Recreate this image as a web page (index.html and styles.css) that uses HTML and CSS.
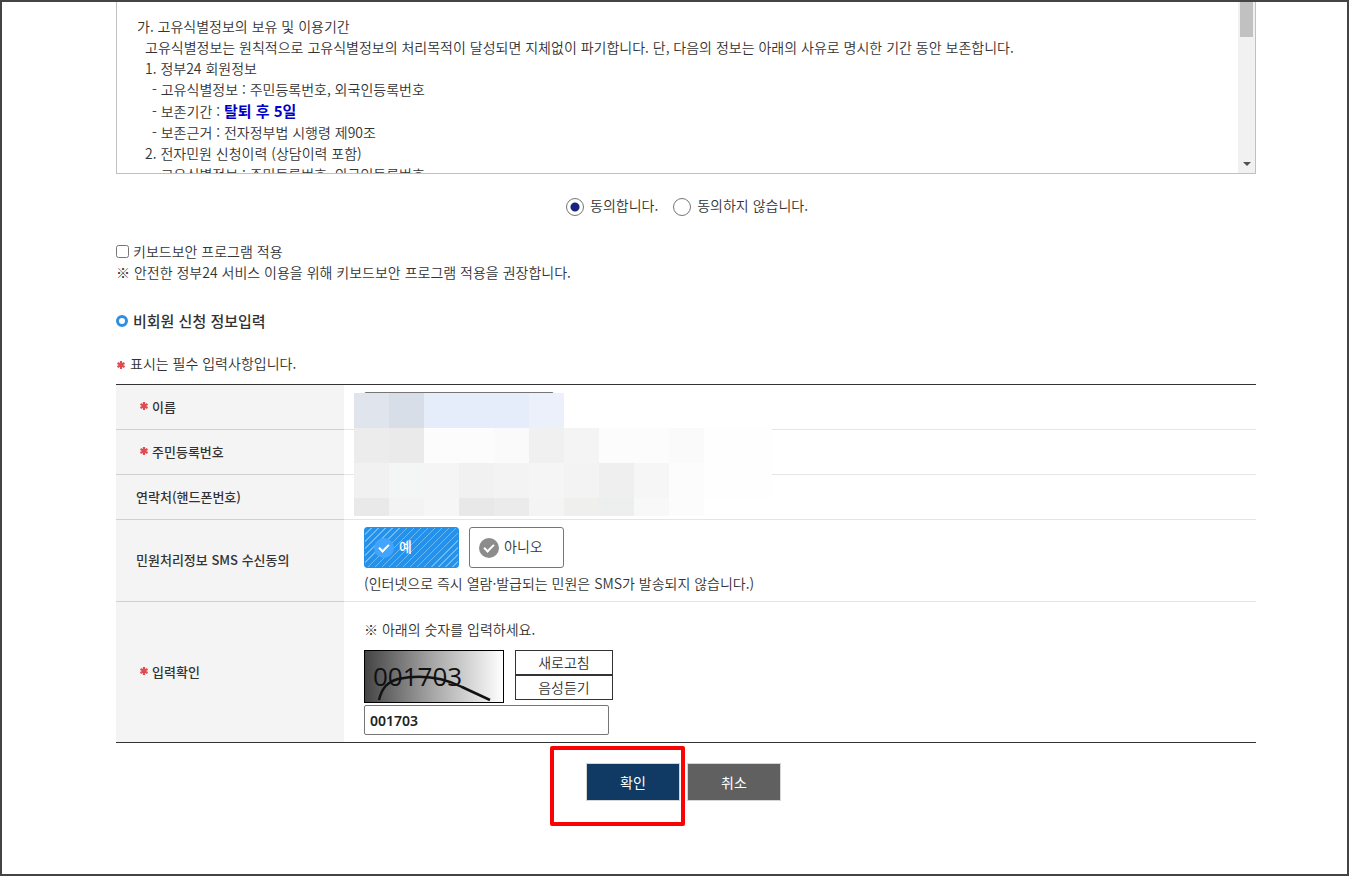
FILE: index.html
```
<!DOCTYPE html>
<html lang="ko">
<head>
<meta charset="UTF-8">
<title>비회원 신청</title>
<link rel="stylesheet" href="styles.css">
</head>
<body>
<!-- 필수표시 아이콘 -->
<svg class="defs" width="0" height="0">
	<symbol id="star" viewBox="0 0 8 8">
		<path d="M4 0V8M0.5 2L7.5 6M0.5 6L7.5 2" stroke="#e04a50" stroke-width="2.2" fill="none"/>
	</symbol>
</svg>
<div id="container">
	<!-- 약관 -->
	<div class="terms">
		<div class="terms_txt">
			<p>가. 고유식별정보의 보유 및 이용기간</p>
			<p class="dep1">고유식별정보는 원칙적으로 고유식별정보의 처리목적이 달성되면 지체없이 파기합니다. 단, 다음의 정보는 아래의 사유로 명시한 기간 동안 보존합니다.</p>
			<p class="dep1">1. 정부24 회원정보</p>
			<p class="dep2">- 고유식별정보 : 주민등록번호, 외국인등록번호</p>
			<p class="dep2">- 보존기간 : <strong>탈퇴 후 5일</strong></p>
			<p class="dep2">- 보존근거 : 전자정부법 시행령 제90조</p>
			<p class="dep1">2. 전자민원 신청이력 (상담이력 포함)</p>
			<p class="dep2">- 고유식별정보 : 주민등록번호, 외국인등록번호</p>
		</div>
		<div class="scroll">
			<div class="thumb"></div>
			<div class="down"></div>
		</div>
	</div>

	<!-- 동의 -->
	<div class="agree">
		<label><input type="radio" name="agree" checked><span>동의합니다.</span></label>
		<label><input type="radio" name="agree"><span>동의하지 않습니다.</span></label>
	</div>

	<div class="security">
		<label><input type="checkbox">키보드보안 프로그램 적용</label>
		<p>※ 안전한 정부24 서비스 이용을 위해 키보드보안 프로그램 적용을 권장합니다.</p>
	</div>

	<h2>비회원 신청 정보입력</h2>
	<p class="note"><svg class="star"><use href="#star"/></svg>표시는 필수 입력사항입니다.</p>

	<!-- 정보입력 -->
	<table class="form">
		<tr>
			<th><svg class="star"><use href="#star"/></svg><label for="name">이름</label></th>
			<td class="name">
				<input type="text" id="name">
				<svg class="mosaic" width="418" height="123" shape-rendering="crispEdges">
					<rect y="35" width="418" height="70" fill="#fefefe"/>
					<rect x="0" y="0" width="35" height="35" fill="#e0e4ec"/>
					<rect x="35" y="0" width="35" height="35" fill="#d8dee8"/>
					<rect x="70" y="0" width="105" height="35" fill="#e6edfa"/>
					<rect x="175" y="0" width="35" height="35" fill="#ebf0fa"/>
					<rect x="0" y="35" width="35" height="35" fill="#ececec"/>
					<rect x="35" y="35" width="35" height="35" fill="#eaeaea"/>
					<rect x="70" y="35" width="70" height="35" fill="#fcfcfc"/>
					<rect x="140" y="35" width="35" height="35" fill="#fafafa"/>
					<rect x="175" y="35" width="35" height="35" fill="#f0f0f0"/>
					<rect x="210" y="35" width="35" height="35" fill="#f4f4f4"/>
					<rect x="245" y="35" width="70" height="35" fill="#fcfcfc"/>
					<rect x="315" y="35" width="35" height="35" fill="#fafafa"/>
					<rect x="0" y="70" width="35" height="35" fill="#f1f1f1"/>
					<rect x="35" y="70" width="35" height="35" fill="#f4f6f5"/>
					<rect x="70" y="70" width="35" height="35" fill="#f5f5f5"/>
					<rect x="105" y="70" width="35" height="35" fill="#f1f1f1"/>
					<rect x="140" y="70" width="35" height="35" fill="#f3f3f3"/>
					<rect x="175" y="70" width="35" height="35" fill="#f5f5f5"/>
					<rect x="210" y="70" width="35" height="35" fill="#f3f3f3"/>
					<rect x="245" y="70" width="35" height="35" fill="#efefef"/>
					<rect x="280" y="70" width="35" height="35" fill="#f6f6f6"/>
					<rect x="315" y="70" width="35" height="35" fill="#fcfcfc"/>
					<rect x="0" y="105" width="35" height="18" fill="#e9e9e9"/>
					<rect x="35" y="105" width="35" height="18" fill="#f3f3f3"/>
					<rect x="70" y="105" width="35" height="18" fill="#f6f6f6"/>
					<rect x="105" y="105" width="35" height="18" fill="#e8e8e8"/>
					<rect x="140" y="105" width="35" height="18" fill="#ebebeb"/>
					<rect x="175" y="105" width="35" height="18" fill="#f4f4f4"/>
					<rect x="210" y="105" width="35" height="18" fill="#efefed"/>
					<rect x="245" y="105" width="35" height="18" fill="#edefee"/>
					<rect x="280" y="105" width="35" height="18" fill="#f8f8f8"/>
					<rect x="315" y="105" width="35" height="18" fill="#fcfcfc"/>
				</svg>
			</td>
		</tr>
		<tr>
			<th><svg class="star"><use href="#star"/></svg>주민등록번호</th>
			<td></td>
		</tr>
		<tr>
			<th>연락처(핸드폰번호)</th>
			<td></td>
		</tr>
		<tr>
			<th>민원처리정보 SMS 수신동의</th>
			<td class="sms">
				<div class="choices">
					<label class="choice on"><input type="radio" name="sms" checked>예</label>
					<label class="choice"><input type="radio" name="sms">아니오</label>
				</div>
				<p>(인터넷으로 즉시 열람·발급되는 민원은 SMS가 발송되지 않습니다.)</p>
			</td>
		</tr>
		<tr>
			<th><svg class="star"><use href="#star"/></svg><label for="captcha">입력확인</label></th>
			<td class="check">
				<p>※ 아래의 숫자를 입력하세요.</p>
				<div class="captcha">
					<svg class="cap_img" width="140" height="53">
						<defs>
							<linearGradient id="gray">
								<stop offset="0" stop-color="#444"/>
								<stop offset="0.5" stop-color="#a8a8a8"/>
								<stop offset="1" stop-color="#fff"/>
							</linearGradient>
						</defs>
						<rect x="0.5" y="0.5" width="139" height="52" fill="url(#gray)" stroke="#000"/>
						<text x="9" y="36">001703</text>
						<path d="M15 50C18 37 24 32 34 29C58 24 80 28 98 37L126 50" fill="none" stroke="#111" stroke-width="2.5"/>
					</svg>
					<div class="cap_btns">
						<button type="button">새로고침</button>
						<button type="button">음성듣기</button>
					</div>
				</div>
				<input type="text" id="captcha" value="001703">
			</td>
		</tr>
	</table>

	<!-- 버튼 -->
	<div class="btns">
		<div class="mark"><button type="button" class="ok">확인</button></div>
		<button type="button" class="cancel">취소</button>
	</div>
</div>
</body>
</html>
```
FILE: styles.css
```
*{
	box-sizing: border-box;
}
body{
	margin: 0;
	min-height: 100vh;
	border: 2px solid #444;
	background: #fff;
	color: #333;
	font-family: "Noto Sans CJK KR", sans-serif;
	font-size: 14px;
	font-weight: 350;
	line-height: 21px;
}
p, h2{
	margin: 0;
}
input, button{
	margin: 0;
	font-family: inherit;
	font-size: 14px;
}
.defs{
	position: absolute;
}
#container{
	padding: 0 91px 0 114px;
}

/* 약관 */
.terms{
	display: flex;
	height: 172px;
	border: 1px solid #c0c0c0;
	border-top: 0;
	overflow: hidden;
}
.terms_txt{
	flex: 1;
	padding: 14px 20px 0;
}
.terms_txt .dep1{
	padding-left: 8px;
}
.terms_txt .dep2{
	padding-left: 15px;
}
.terms_txt strong{
	font-size: 15px;
	font-weight: 700;
	color: #0000c8;
}
.scroll{
	display: flex;
	flex-direction: column;
	justify-content: space-between;
	align-items: center;
	width: 17px;
	padding-bottom: 7px;
	background: #f1f1f1;
}
.thumb{
	width: 13px;
	height: 35px;
	background: #c1c1c1;
}
.down{
	border: 4px solid transparent;
	border-top-color: #505050;
	border-bottom: 0;
}

.agree{
	display: flex;
	justify-content: center;
	gap: 15px;
	margin-top: 21px;
	padding-left: 2px;
}
.agree label{
	display: flex;
	align-items: center;
	gap: 6px;
}
.agree input{
	appearance: none;
	width: 18px;
	height: 18px;
	margin-top: 2px;
	border: 1px solid #767676;
	border-radius: 50%;
}
.agree input:checked{
	background: radial-gradient(circle, #1a237e 4px, #fff 5px);
}

.security{
	margin-top: 25px;
}
.security label{
	display: flex;
	align-items: center;
	gap: 4px;
}
.security input{
	width: 13px;
	height: 13px;
}

h2{
	display: flex;
	align-items: center;
	gap: 5px;
	margin-top: 27px;
	font-size: 15px;
	font-weight: 500;
	line-height: 22px;
}
h2::before{
	content: "";
	width: 6px;
	height: 6px;
	border: 3px solid #2e8fe0;
	border-radius: 50%;
}
.star{
	width: 8px;
	height: 8px;
	margin-right: 5px;
}
.note{
	margin-top: 21px;
	padding-left: 1px;
}

/* 정보입력 */
.form{
	width: 100%;
	margin-top: 10px;
	border-collapse: separate;
	border-spacing: 0;
	border-top: 1px solid #333;
	border-bottom: 1px solid #333;
}
.form th{
	width: 228px;
	height: 45px;
	padding: 0 20px 2px;
	border-bottom: 1px solid #d0d0d0;
	background: #f4f4f4;
	font-size: 13px;
	font-weight: 500;
	text-align: left;
}
.form th .star{
	margin-left: 4px;
	margin-right: 4px;
	margin-bottom: 2px;
}
.form td{
	padding: 0 20px;
	border-bottom: 1px solid #e5e5e5;
}
.form tr:last-child th,
.form tr:last-child td{
	border-bottom: 0;
}
.form input[type=text]{
	display: block;
	height: 30px;
	padding: 0 5px;
	border: 1px solid #767676;
	border-radius: 2px;
	color: #222;
}
.form .name{
	position: relative;
}
#name{
	width: 190px;
}
.mosaic{
	position: absolute;
	left: 10px;
	top: 8px;
}
.form .sms{
	padding: 7px 20px;
}
.choices{
	display: flex;
	gap: 10px;
	margin-bottom: 5px;
}
.choice{
	display: flex;
	gap: 5px;
	width: 95px;
	height: 41px;
	padding: 8px 9px;
	border: 1px solid #767676;
	border-radius: 3px;
}
.choice input{
	appearance: none;
	display: flex;
	justify-content: center;
	width: 20px;
	height: 20px;
	margin-top: 2px;
	border-radius: 50%;
	background: #8c8c8c;
}
.choice input::after{
	content: "";
	width: 4px;
	height: 8px;
	margin-top: 4px;
	border: solid #fff;
	border-width: 0 2px 2px 0;
	transform: rotate(45deg);
}
.on{
	border-color: #2492eb;
	background: repeating-linear-gradient(135deg, #2492eb 0 4px, #6bb9f5 4px 5px);
	color: #fff;
	font-weight: 500;
}
.on input{
	background: #41a5ff;
}
.form .check{
	padding: 17px 20px 7px;
}
.captcha{
	display: flex;
	gap: 11px;
	margin: 10px 0 2px;
}
.cap_img text{
	font-family: "Open Sans", sans-serif;
	font-size: 26px;
	font-weight: 400;
	fill: #111;
}
.cap_btns{
	display: flex;
	flex-direction: column;
}
.cap_btns button{
	width: 98px;
	height: 25px;
	padding: 0 0 2px;
	border: 1px solid #333;
	background: #fff;
	color: #333;
	font-weight: 350;
}
#captcha{
	width: 245px;
	font-family: "Noto Sans", sans-serif;
	font-weight: 600;
}

.btns{
	display: flex;
	justify-content: center;
	gap: 7px;
	margin-top: 20px;
	padding-right: 5px;
}
.btns button{
	width: 94px;
	height: 38px;
	border: 1px solid #d5d5d5;
	color: #fff;
}
.btns .ok{
	background: #103a63;
}
.btns .cancel{
	background: #606060;
}
.mark{
	position: relative;
}
/* 확인 버튼 강조 */
.mark::after{
	content: "";
	position: absolute;
	left: -36px;
	right: -5px;
	top: -17px;
	bottom: -25px;
	border: 4px solid #f80404;
	border-radius: 2px;
}
```
